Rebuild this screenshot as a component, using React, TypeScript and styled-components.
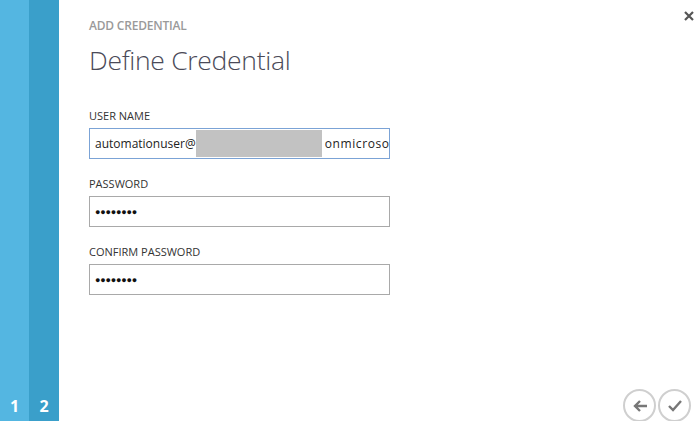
import React from "react";
import styled, { createGlobalStyle } from "styled-components";

const Global = createGlobalStyle`
  html, body { margin: 0; padding: 0; background: #fff; }
  body { font-family: "Open Sans", "Noto Sans", sans-serif; }
`;

const Page = styled.div`
  position: relative;
  display: flex;
  width: 100vw;
  height: 100vh;
  overflow: hidden;
  background: #fff;
`;

const Step = styled.div<{ $tone: string; $w: number }>`
  width: ${(p) => p.$w}px;
  flex: none;
  background: ${(p) => p.$tone};
  display: flex;
  align-items: flex-end;
  justify-content: center;
  color: #fff;
  font-family: "Open Sans", sans-serif;
  font-weight: 700;
  font-size: 16px;
  line-height: 1;
  padding-bottom: 7px;
  box-sizing: border-box;
`;

const Main = styled.div`
  flex: 1;
  display: flex;
  flex-direction: column;
  padding: 18px 0 0 30px;
  box-sizing: border-box;
`;

const Kicker = styled.div`
  font-size: 12px;
  font-weight: 600;
  color: #9a9a9a;
  letter-spacing: -0.2px;
  line-height: 16px;
`;

const Title = styled.h1`
  margin: 8px 0 0 0;
  font-size: 26.5px;
  font-weight: 300;
  color: #4a4a58;
  line-height: 36px;
  letter-spacing: -0.3px;
`;

const Form = styled.div`
  display: flex;
  flex-direction: column;
  margin-top: 31px;
`;

const Field = styled.div`
  display: flex;
  flex-direction: column;
  margin-bottom: 18px;
`;

const Label = styled.label`
  font-size: 11px;
  color: #333;
  line-height: 14px;
  margin: 0 0 5px 0;
`;

const Box = styled.div<{ $focus?: boolean }>`
  width: 301px;
  height: 31px;
  box-sizing: border-box;
  border: 1px solid ${(p) => (p.$focus ? "#7ba3d6" : "#a9a9a9")};
  display: flex;
  align-items: center;
  padding: 0 5px;
  font-size: 12px;
  color: #222;
  white-space: nowrap;
  overflow: hidden;
  font-family: "Open Sans", sans-serif;
`;

const Redact = styled.span`
  display: inline-block;
  width: 126px;
  height: 27px;
  margin-right: 3px;
  background: #c2c2c2;
  flex: none;
`;

const Domain = styled.span`
  letter-spacing: 0.6px;
`;

const Dots = styled.span`
  font-size: 9px;
  letter-spacing: -0.2px;
  color: #111;
`;

const Close = styled.div`
  position: absolute;
  top: 10px;
  right: 1px;
  width: 12px;
  height: 12px;
  display: flex;
  align-items: center;
  justify-content: center;
`;

const Footer = styled.div`
  position: absolute;
  right: 5px;
  bottom: -1px;
  display: flex;
  gap: 2px;
`;

const Circle = styled.button`
  width: 33px;
  height: 33px;
  border-radius: 50%;
  border: 2px solid #cfcfcf;
  background: #fff;
  padding: 0;
  display: flex;
  align-items: center;
  justify-content: center;
  box-sizing: border-box;
`;

export default function App() {
  return (
    <Page>
      <Global />
      <Step $tone="#54b6e1" $w={29}>1</Step>
      <Step $tone="#3a9fca" $w={30}>2</Step>
      <Main>
        <Kicker>ADD CREDENTIAL</Kicker>
        <Title>Define Credential</Title>
        <Form>
          <Field>
            <Label>USER NAME</Label>
            <Box $focus>
              automationuser@<Redact /><Domain>onmicrosoft.com</Domain>
            </Box>
          </Field>
          <Field>
            <Label>PASSWORD</Label>
            <Box>
              <Dots>●●●●●●●●</Dots>
            </Box>
          </Field>
          <Field>
            <Label>CONFIRM PASSWORD</Label>
            <Box>
              <Dots>●●●●●●●●</Dots>
            </Box>
          </Field>
        </Form>
      </Main>
      <Close>
        <svg width="10" height="10" viewBox="0 0 10 10">
          <path d="M1 1L9 9M9 1L1 9" stroke="#555" strokeWidth="2.2" />
        </svg>
      </Close>
      <Footer>
        <Circle aria-label="back">
          <svg width="16" height="14" viewBox="0 0 16 14">
            <path d="M15 7H3M8 2L3 7l5 5" stroke="#777" strokeWidth="2.4" fill="none" />
          </svg>
        </Circle>
        <Circle aria-label="finish">
          <svg width="16" height="14" viewBox="0 0 16 14">
            <path d="M2 7l4 4 8-9" stroke="#777" strokeWidth="2.4" fill="none" />
          </svg>
        </Circle>
      </Footer>
    </Page>
  );
}
